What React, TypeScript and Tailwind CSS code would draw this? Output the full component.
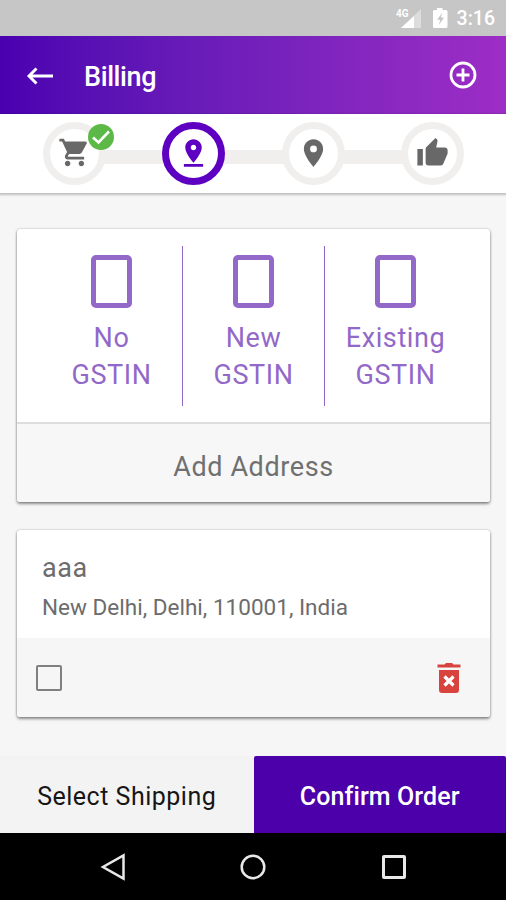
import React from "react";

const options = ["No", "New", "Existing"];

function Glyph({ d, className }: { d: string; className: string }) {
  return (
    <svg viewBox="0 0 24 24" fill="currentColor" className={className}>
      <path fillRule="evenodd" d={d} />
    </svg>
  );
}

const cart =
  "M7 18c-1.1 0-1.99.9-1.99 2S5.9 22 7 22s2-.9 2-2-.9-2-2-2zM1 2v2h2l3.6 7.59-1.35 2.45c-.16.28-.25.61-.25.96 0 1.1.9 2 2 2h12v-2H7.42c-.14 0-.25-.11-.25-.25l.03-.12.9-1.63h7.45c.75 0 1.41-.41 1.75-1.03l3.58-6.49A1.003 1.003 0 0 0 20 4H5.21l-.94-2H1zm16 16c-1.1 0-1.99.9-1.99 2s.89 2 1.99 2 2-.9 2-2-.9-2-2-2z";
const pinDrop =
  "M18 8c0-3.31-2.69-6-6-6S6 4.69 6 8c0 4.5 6 11 6 11s6-6.5 6-11zm-8 0c0-1.1.9-2 2-2s2 .9 2 2-.89 2-2 2c-1.1 0-2-.9-2-2zM5 20v2h14v-2H5z";
const place =
  "M12 2C8.13 2 5 5.13 5 9c0 5.25 7 13 7 13s7-7.75 7-13c0-3.87-3.13-7-7-7zm0 9.5a2.5 2.5 0 0 1 0-5 2.5 2.5 0 0 1 0 5z";
const thumb =
  "M1 21h4V9H1v12zm22-11c0-1.1-.9-2-2-2h-6.31l.95-4.57.03-.32c0-.41-.17-.79-.44-1.06L14.17 1 7.59 7.59C7.22 7.95 7 8.45 7 9v10c0 1.1.9 2 2 2h9c.83 0 1.54-.5 1.84-1.22l3.02-7.05c.09-.23.14-.47.14-.73v-2z";

function StatusBar() {
  return (
    <div className="flex h-9 items-center justify-end bg-[#c6c6c6] pr-[11px] text-white">
      <svg width="54" height="24" viewBox="0 0 54 24" className="mr-[7px]">
        <text x="0" y="11" fontSize="10.5" fontWeight="700" fill="#fff" textLength="12.5" lengthAdjust="spacingAndGlyphs">4G</text>
        <path d="M25 3V22H5z" fill="#fff" fillOpacity=".4" />
        <path d="M18 10V22H5z" fill="#fff" />
        <path d="M41 2h5.500v2H50a1.500 1.500 0 0 1 1.500 1.500v15A1.500 1.500 0 0 1 50 22H38.500a1.500 1.500 0 0 1-1.500-1.500v-15A1.500 1.500 0 0 1 38.500 4H41z" fill="#fff" />
        <path d="M46.500 6.500l-5.500 7.200h3.200l-1.300 5.300 5.100-7.400h-3.200z" fill="#c6c6c6" />
      </svg>
      <span className="translate-y-[1px] text-[19.500px] leading-6 font-medium">3:16</span>
    </div>
  );
}

function Header() {
  return (
    <header className="flex h-[78px] items-center bg-linear-to-r from-[#4b00b0] to-[#9d2dc5] pr-[29px] pl-[26px] text-white">
      <svg width="28" height="20" viewBox="0 0 28 20" fill="none" stroke="currentColor" strokeWidth="2.900" className="mt-px">
        <path d="M27 10H3M10.500 2.500L3 10l7.500 7.500" />
      </svg>
      <h1 className="mt-[5px] ml-[30px] text-[27px] font-medium tracking-[-0.4px]">Billing</h1>
      <svg width="28" height="28" viewBox="0 0 28 28" fill="none" stroke="currentColor" strokeWidth="2.800" className="ml-auto">
        <circle cx="14" cy="14" r="12" />
        <path d="M14 7.500v13M7.500 14h13" />
      </svg>
    </header>
  );
}

function Step({ d, active, done }: { d: string; active?: boolean; done?: boolean }) {
  return (
    <div
      className={
        active
          ? "relative flex size-[63px] items-center justify-center rounded-full border-7 border-[#5d00c1] bg-white text-[#5d00c1]"
          : "relative flex size-[63px] items-center justify-center rounded-full border-7 border-[#f1eeee] bg-white text-[#686868]"
      }
    >
      <Glyph d={d} className={done ? "size-[33px] shrink-0 -translate-y-px" : "size-[33px] shrink-0 -translate-y-[0.5px]"} />
      {done && (
        <svg viewBox="0 0 26 26" className="absolute -top-[5px] left-[38px] size-[26px]">
          <circle cx="13" cy="13" r="13" fill="#5cb947" />
          <path d="M5 13.500l5.500 5L21 7.500" fill="none" stroke="#fff" strokeWidth="2.600" />
        </svg>
      )}
    </div>
  );
}

function Connector() {
  return <div className="-mx-1 mt-[6px] h-[14px] flex-1 bg-[#f1eeee]" />;
}

function Stepper() {
  return (
    <nav className="flex h-[79px] items-center bg-white pr-[42px] pl-[42.500px] shadow-[0_1px_2px_1px_rgba(0,0,0,0.22)]">
      <Step d={cart} done />
      <Connector />
      <Step d={pinDrop} active />
      <Connector />
      <Step d={place} />
      <Connector />
      <Step d={thumb} />
    </nav>
  );
}

export default function App() {
  return (
    <div className="flex h-[900px] w-[506px] flex-col overflow-hidden bg-[#f6f6f6] font-[Roboto,sans-serif]">
      <StatusBar />
      <Header />
      <Stepper />
      <main className="flex flex-1 flex-col gap-7 pt-9 pr-4 pl-[17px]">
        <section className="h-[273px] overflow-clip rounded-[3px] bg-white shadow-[0_2px_3px_rgba(0,0,0,0.42),0_0_2px_rgba(0,0,0,0.3)]">
          <div className="flex h-[193px] px-6 pt-[17px]">
            {options.map((name) => (
              <div
                key={name}
                className="flex h-[160px] flex-1 flex-col items-center border-r-[1.500px] border-[#9269c8] pt-[9px] text-center text-[27px] leading-[37px] text-[#9269c8] last:border-r-0"
              >
                <div className="h-[53px] w-[41px] shrink-0 rounded-[5px] border-[5px] border-[#9269c8]" />
                <div className="mt-[12px] tracking-[0.600px]">{name}</div>
                <div className="tracking-[0.600px]">GSTIN</div>
              </div>
            ))}
          </div>
          <button className="flex h-[80px] w-full items-center justify-center border-t-2 border-[#dddddd] bg-[#f7f7f7] pt-[9px] text-[27px] tracking-[0.600px] text-[#707070]">
            Add Address
          </button>
        </section>
        <section className="h-[187px] overflow-clip rounded-[3px] bg-white shadow-[0_2px_3px_rgba(0,0,0,0.42),0_0_2px_rgba(0,0,0,0.3)]">
          <div className="h-[108px] pt-5 pl-[25px] text-[#6c6c6c]">
            <div className="text-[27px] leading-9 tracking-[0.600px]">aaa</div>
            <div className="mt-[5px] text-[22.500px] leading-8 tracking-[0.020px]">New Delhi, Delhi, 110001, India</div>
          </div>
          <div className="flex h-[79px] items-center justify-between bg-[#f6f6f6] pr-[29px] pl-[19px]">
            <div className="size-[26px] rounded-[2px] border-2 border-[#808080]" />
            <svg width="24" height="30" viewBox="0 0 24 30">
              <path d="M.5 1.500h7L9 0h6l1.500 1.500h7V4.500H.5zM2 7h20v20a3 3 0 0 1-3 3H5a3 3 0 0 1-3-3z" fill="#d8443d" />
              <path d="M7.500 13.500l9 9m0-9l-9 9" stroke="#fff" strokeWidth="3.200" />
            </svg>
          </div>
        </section>
      </main>
      <footer className="flex h-[77px] shrink-0">
        <button className="flex-1 bg-[#f3f3f3] pt-1 text-[25px] tracking-[0.500px] text-[#161616]">Select Shipping</button>
        <button className="w-[252.500px] rounded-t-[2px] bg-[#4b00aa] pt-1 text-[25px] font-medium tracking-[0.100px] text-white">Confirm Order</button>
      </footer>
      <div className="flex h-[67px] shrink-0 items-center justify-between bg-black pr-[100px] pl-[99.500px]">
        <svg width="25" height="28" viewBox="0 0 25 28" fill="none" stroke="#e8e8e8" strokeWidth="2.500">
          <path d="M23.500 2.500v23L3 14z" />
        </svg>
        <svg width="26" height="26" viewBox="0 0 26 26" fill="none" stroke="#e8e8e8" strokeWidth="2.500">
          <circle cx="13" cy="13" r="11.300" />
        </svg>
        <div className="size-6 rounded-[2px] border-3 border-[#e8e8e8]" />
      </div>
    </div>
  );
}
